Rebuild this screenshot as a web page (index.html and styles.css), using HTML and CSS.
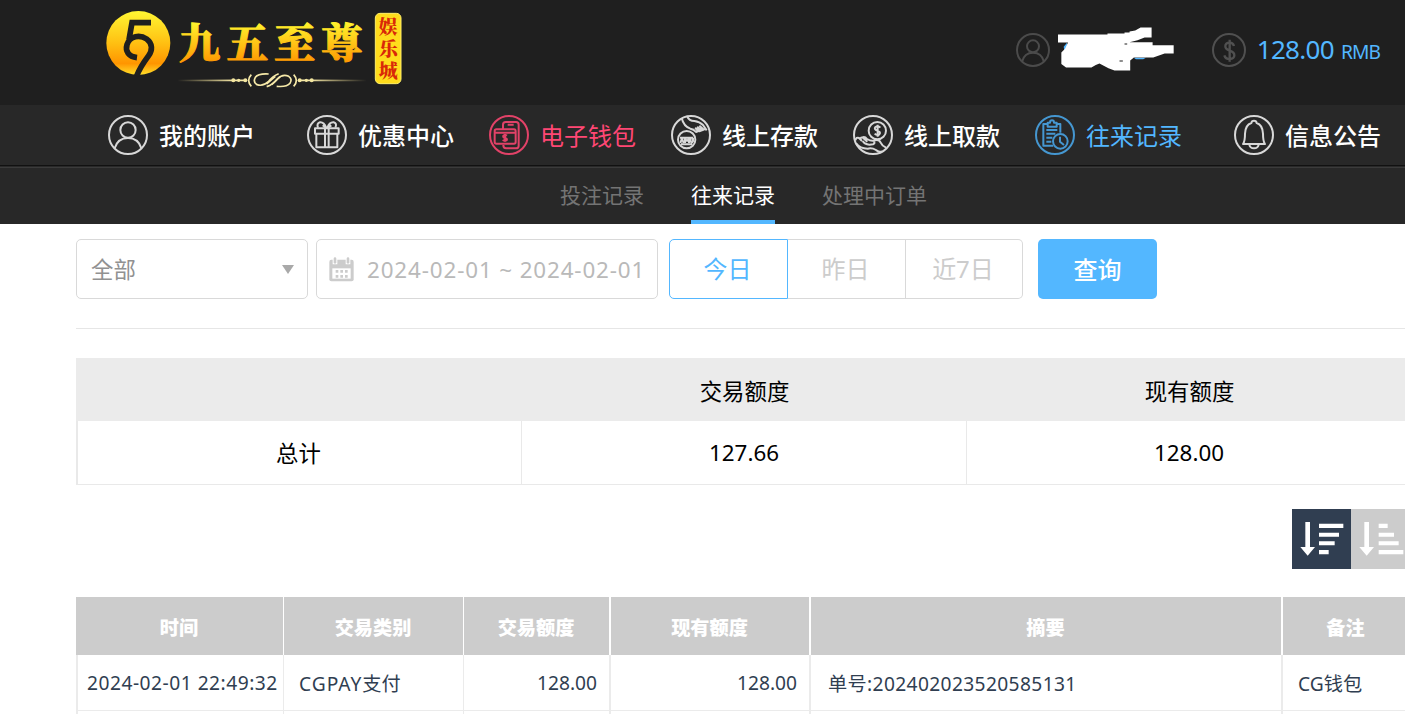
FILE: index.html
```
<!DOCTYPE html>
<html lang="zh-CN">
<head>
    <meta charset="UTF-8">
    <title>往来记录</title>
    <link rel="stylesheet" href="styles.css">
</head>
<body>
    <header class="header">
        <svg class="logo" viewBox="0 0 990 315">
            <defs>
                <linearGradient id="gold" x1="0" y1="0" x2="0" y2="1">
                    <stop offset="0" stop-color="#fff633"/>
                    <stop offset="0.5" stop-color="#ffc012"/>
                    <stop offset="0.82" stop-color="#ff9500"/>
                    <stop offset="1" stop-color="#ffe02a"/>
                </linearGradient>
                <linearGradient id="goldText" gradientUnits="userSpaceOnUse" x1="0" y1="70" x2="0" y2="190">
                    <stop offset="0" stop-color="#fff22c"/>
                    <stop offset="1" stop-color="#ff9600"/>
                </linearGradient>
                <linearGradient id="rule" gradientUnits="userSpaceOnUse" x1="262" y1="0" x2="830" y2="0">
                    <stop offset="0" stop-color="#e9d78c" stop-opacity="0"/>
                    <stop offset="0.3" stop-color="#f6e9a8"/>
                    <stop offset="0.7" stop-color="#f6e9a8"/>
                    <stop offset="1" stop-color="#e9d78c" stop-opacity="0"/>
                </linearGradient>
            </defs>
            <circle cx="145" cy="129" r="96" fill="url(#gold)"/>
            <g fill="none" stroke="#1f1f1f" stroke-width="17">
                <path d="M183 68H126L117 119"/>
                <path d="M141 173C116 170 105 154 111 134C119 106 151 104 170 117C189 131 187 152 176 167C161 187 149 204 140 228"/>
            </g>
            <g class="logo-name" fill="url(#goldText)" stroke="url(#goldText)" stroke-width="3">
                <text x="267" y="175">九</text>
                <text x="410" y="175">五</text>
                <text x="552" y="175">至</text>
                <text x="694" y="175">尊</text>
            </g>
            <g fill="none" stroke="url(#rule)" stroke-width="5">
                <path d="M262 241.500L470 241M624 241L830 241.500"/>
                <path d="M484 224Q468 241 484 259M611 224Q627 241 611 259"/>
                <path d="M536 222Q505 220 496 232Q488 246 501 254Q520 260 535 245Q548 228 566 221"/>
                <path d="M560 259Q590 262 600 250Q608 237 596 229Q578 221 562 237Q549 254 530 260"/>
                <path d="M556 229L530 252M570 230L545 254"/>
            </g>
            <g fill="#f3e6a0">
                <circle cx="430" cy="241" r="6"/><circle cx="446" cy="241" r="5"/><circle cx="466" cy="241" r="6"/>
                <circle cx="629" cy="241" r="6"/><circle cx="649" cy="241" r="5"/><circle cx="665" cy="241" r="6"/>
            </g>
            <rect x="856" y="40" width="77" height="211" rx="14" fill="#ffdc1c" stroke="#fff06a" stroke-width="3"/>
            <g class="logo-tag" fill="#d92808">
                <text x="866" y="102">娱</text>
                <text x="866" y="168">乐</text>
                <text x="866" y="234">城</text>
            </g>
        </svg>
        <div class="user">
            <svg class="user-icon" viewBox="0 0 102 102">
                <circle cx="51" cy="51" r="48"/>
                <circle cx="51" cy="40" r="18"/>
                <path d="M18 86Q25 59 51 59Q77 59 84 86"/>
            </svg>
            <svg class="user-name" viewBox="173 53 347 131">
                <path d="M400 145h36l-8 4h-22zM190 112l10-12v15l-8 8z" fill="#53b7ff"/>
                <path d="M173 75H321V72H372V69H387V66L404 63L420 54H453V84H432L411 92L387 98H456V107H519V132H492L458 144H400L389 153V183H342L324 176L297 162L286 166L273 174H197L183 163V129L194 118L203 99H173Z" fill="#fff"/>
                <path d="M372 102h8v3h-8zM357 153h10v3h-10z" fill="#1f1f1f"/>
            </svg>
            <svg class="user-icon money-icon" viewBox="0 0 102 102">
                <circle cx="51" cy="51" r="48"/>
                <path d="M53 20V86M66 39Q63 29 53 29Q40 29 40 40Q40 49 53 53Q67 57 67 67Q67 78 53 78Q40 78 37 67" stroke-width="7"/>
            </svg>
            <span class="balance">128.00</span>
            <span class="currency">RMB</span>
        </div>
    </header>

    <nav class="nav">
        <a class="nav-item">
            <svg class="nav-icon" viewBox="0 0 120 120">
                <circle cx="60" cy="60" r="57"/>
                <circle cx="60" cy="45" r="23"/>
                <path d="M20 100Q29 69 60 69Q91 69 100 100"/>
            </svg>
            <span>我的账户</span>
        </a>
        <a class="nav-item">
            <svg class="nav-icon" viewBox="0 0 120 120">
                <circle cx="60" cy="60" r="57"/>
                <path d="M24 40H95V56H24ZM28 56V97H91V56M54 40V97M65 40V97"/>
                <path d="M58 39Q51 21 39 22Q28 25 33 38M61 39Q67 21 80 22Q91 25 85 38M57 39L47 31M62 39L73 31"/>
            </svg>
            <span>优惠中心</span>
        </a>
        <a class="nav-item wallet">
            <svg class="nav-icon" viewBox="0 0 120 120">
                <circle cx="60" cy="60" r="57"/>
                <path d="M42 43V29Q42 21 50 21H81Q89 21 89 29V92Q89 100 81 100H51Q43 100 43 90M56 29H74"/>
                <path d="M22 43H75Q80 43 80 49V82Q80 86 75 86H22Q17 86 17 81V48Q17 43 22 43ZM17 53H80"/>
                <path d="M48 57V80M54 62Q48 58 43 62Q41 67 48 69Q56 71 53 76Q48 80 41 75"/>
            </svg>
            <span>电子钱包</span>
        </a>
        <a class="nav-item">
            <svg class="nav-icon" viewBox="0 0 120 120">
                <circle cx="60" cy="60" r="57"/>
                <circle cx="47" cy="74" r="26"/>
                <path d="M27 68H67M28 84L33 70L38 84M42 84V70L48 78L54 70V84M59 69V79Q62 86 66 79V69M30 88H64"/>
                <path d="M32 9Q38 34 58 41Q68 42 75 51L81 49L74 40L85 49L91 47L80 37L93 46L99 44L85 32M49 5Q54 18 70 18Q86 20 96 30L107 46"/>
            </svg>
            <span>线上存款</span>
        </a>
        <a class="nav-item">
            <svg class="nav-icon" viewBox="0 0 120 120">
                <circle cx="60" cy="60" r="57"/>
                <circle cx="73" cy="47" r="26"/>
                <path d="M74 29V65M82 38Q76 31 67 36Q62 43 73 47Q85 51 79 58Q72 63 65 56"/>
                <path d="M7 76Q10 65 18 69L27 78M22 70Q27 64 34 72L43 80M28 67Q36 64 42 72Q55 80 67 76Q78 73 83 83Q88 94 99 98M29 78Q35 88 49 89L60 88Q68 84 62 80M10 86Q21 101 44 101Q57 98 69 105Q77 113 87 109"/>
            </svg>
            <span>线上取款</span>
        </a>
        <a class="nav-item active">
            <svg class="nav-icon" viewBox="0 0 120 120">
                <circle cx="60" cy="60" r="57"/>
                <path d="M37 27H25V92H55M66 27H76V53M38 23H45Q45 16 51 16Q57 16 57 23H65V35H38Z"/>
                <path d="M34 45H67M34 56H61M34 68H52M34 80H49"/>
                <circle cx="76" cy="79" r="22"/>
                <path d="M75 65V80L87 90"/>
            </svg>
            <span>往来记录</span>
        </a>
        <a class="nav-item">
            <svg class="nav-icon" viewBox="0 0 120 120">
                <circle cx="60" cy="60" r="57"/>
                <path d="M27 87Q33 79 33 56Q34 30 52 24Q53 17 60 17Q67 17 68 24Q86 30 87 56Q87 79 93 87ZM46 89Q48 100 60 100Q72 100 74 89"/>
            </svg>
            <span>信息公告</span>
        </a>
    </nav>

    <div class="subnav">
        <a>投注记录</a>
        <a class="current">往来记录</a>
        <a>处理中订单</a>
    </div>

    <main class="content">
        <div class="filters">
            <div class="select">
                <span>全部</span>
                <i class="caret"></i>
            </div>
            <div class="date-range">
                <svg class="calendar" viewBox="0 0 75 75">
                    <path d="M7 8H68Q74 8 74 15V67Q74 73 68 73H7Q1 73 1 67V15Q1 8 7 8Z" fill="#ccc"/>
                    <path d="M10 34H65V65H10Z" fill="#fff"/>
                    <path d="M11 0H25V22H11ZM50 0H64V22H50Z" fill="#fff"/>
                    <rect x="14" y="1" width="8" height="19" rx="4" fill="#ccc"/>
                    <rect x="53" y="1" width="8" height="19" rx="4" fill="#ccc"/>
                    <path d="M20 43H56M20 58H56" stroke="#ccc" stroke-width="8" stroke-dasharray="8 6"/>
                </svg>
                <span>2024-02-01 ~ 2024-02-01</span>
            </div>
            <div class="day-group">
                <a class="day selected">今日</a>
                <a class="day">昨日</a>
                <a class="day">近7日</a>
            </div>
            <a class="search">查询</a>
        </div>

        <table class="summary">
            <thead>
                <tr><th></th><th>交易额度</th><th>现有额度</th></tr>
            </thead>
            <tbody>
                <tr><td>总计</td><td>127.66</td><td>128.00</td></tr>
            </tbody>
        </table>

        <div class="sort">
            <a class="sort-btn on">
                <svg viewBox="0 0 177 180">
                    <path d="M40 39H54V114H69L47 140L25 114H40Z"/>
                    <path d="M81 44H154V57H81ZM81 71H141V83H81ZM81 97H128V109H81ZM81 123H110V136H81Z"/>
                </svg>
            </a>
            <a class="sort-btn">
                <svg viewBox="0 0 177 180">
                    <path d="M40 39H54V114H69L47 140L25 114H40Z"/>
                    <path d="M83 44H110V57H83ZM83 71H129V83H83ZM83 97H143V109H83ZM83 123H157V136H83Z"/>
                </svg>
            </a>
        </div>

        <table class="records">
            <colgroup>
                <col class="c-time"><col class="c-type"><col class="c-amount"><col class="c-balance"><col class="c-note"><col class="c-remark">
            </colgroup>
            <thead>
                <tr>
                    <th>时间</th>
                    <th>交易类别</th>
                    <th class="wide">交易额度</th>
                    <th class="wide">现有额度</th>
                    <th class="wide">摘要</th>
                    <th>备注</th>
                </tr>
            </thead>
            <tbody>
                <tr>
                    <td class="time">2024-02-01 22:49:32</td>
                    <td><span class="pay">CGPAY</span>支付</td>
                    <td class="num wide">128.00</td>
                    <td class="num wide">128.00</td>
                    <td class="note wide">单号:202402023520585131</td>
                    <td>CG钱包</td>
                </tr>
                <tr class="tail"><td class="time"></td><td></td><td class="wide"></td><td class="wide"></td><td class="wide"></td><td></td></tr>
            </tbody>
        </table>
    </main>
</body>
</html>
```
FILE: styles.css
```
* {
    box-sizing: border-box;
}

body {
    margin: 0;
    height: 714px;
    overflow: hidden;
    background: #fff;
    font-family: "Noto Sans", "Noto Sans CJK SC", sans-serif;
    color: #000;
}

svg {
    display: block;
}

.header {
    display: flex;
    justify-content: space-between;
    height: 105px;
    padding: 0 25px 0 90px;
    background: #1f1f1f;
}

.logo {
    width: 330px;
    height: 105px;
}

.logo-name {
    font: 900 124px "Noto Serif CJK SC", "Noto Sans CJK SC", serif;
}

.logo-tag {
    font: 900 57px "Noto Serif CJK SC", "Noto Sans CJK SC", serif;
}

.user {
    display: flex;
    align-items: center;
    height: 100px;
    color: #53b7ff;
}

.user-icon {
    width: 34px;
    height: 34px;
    fill: none;
    stroke: #4b4b4b;
    stroke-width: 6;
}

.money-icon {
    stroke: #505050;
}

.user-name {
    width: 116px;
    height: 44px;
    margin: -2px 38px 0 8px;
}

.balance {
    margin: -2px 0 0 11px;
    font-size: 26px;
    letter-spacing: -0.7px;
}

.currency {
    margin: 2px 0 0 7px;
    font-size: 19.2px;
    letter-spacing: -0.9px;
}

.nav {
    display: grid;
    grid-template-columns: 199px repeat(4, 182px) 199px 171px;
    height: 60px;
    padding-left: 108px;
    background: #282828;
}

.nav-item {
    display: flex;
    align-items: center;
    gap: 11px;
    color: #fff;
    font-size: 24px;
    font-weight: 500;
    white-space: nowrap;
}

.nav-item span {
    margin-top: -2px;
}

.nav-icon {
    width: 40px;
    height: 40px;
    fill: none;
    stroke: #d8d8d8;
    stroke-width: 6;
    stroke-linejoin: round;
}

.wallet {
    color: #ff4774;
    font-weight: 400;
}

.wallet .nav-icon {
    stroke: #e24268;
}

.active {
    color: #53b7ff;
    font-weight: 400;
}

.active .nav-icon {
    stroke: #4597d1;
}

.subnav {
    display: flex;
    gap: 47px;
    height: 59px;
    padding-left: 560px;
    border-top: 1px solid #111;
    background: linear-gradient(#282828 1px, #3b3b3b 1px, #3b3b3b 2px, #282828 2px);
    font-size: 21px;
    line-height: 59px;
    color: #747474;
}

.subnav a {
    height: 58px;
}

.subnav .current {
    color: #fff;
    border-bottom: 4px solid #53b7ff;
}

.content {
    width: 1410px;
    padding-left: 76px;
}

.filters {
    display: flex;
    height: 105px;
    padding-top: 15px;
    border-bottom: 1px solid #e6e6e6;
    font-size: 24px;
    line-height: 60px;
}

.select {
    display: flex;
    align-items: center;
    justify-content: space-between;
    width: 232px;
    height: 60px;
    margin-right: 8px;
    padding: 0 13px 0 14px;
    border: 1px solid #d9d9d9;
    border-radius: 5px;
    color: #919191;
    font-size: 22.400px;
}

.select span,
.date-range span {
    margin-top: 2px;
}

.caret {
    border: 6px solid transparent;
    border-top: 9px solid #a9a9a9;
    border-bottom: 0;
}

.date-range {
    display: flex;
    align-items: center;
    width: 342px;
    height: 60px;
    margin-right: 11px;
    padding-left: 12px;
    border: 1px solid #d9d9d9;
    border-radius: 5px;
    color: #b9b9b9;
    font-size: 22.400px;
    letter-spacing: 0.87px;
    white-space: nowrap;
}

.calendar {
    width: 25px;
    height: 25px;
    margin-right: 13px;
}

.day-group {
    display: flex;
    height: 60px;
    margin-right: 15px;
    line-height: 58px;
    text-align: center;
    color: #ccc;
}

.day {
    width: 118px;
    padding-right: 2px;
    border: 1px solid #d9d9d9;
    border-left: 0;
}

.day.selected {
    width: 119px;
    border: 1px solid #53b7ff;
    border-radius: 5px 0 0 5px;
    color: #53b7ff;
}

.day:last-child {
    width: 117px;
    border-radius: 0 5px 5px 0;
}

.search {
    width: 119px;
    height: 60px;
    border-radius: 5px;
    background: #53b7ff;
    color: #fff;
    font-weight: 500;
    line-height: 61px;
    text-align: center;
}

.summary {
    width: 1336px;
    margin-top: 29px;
    border-spacing: 0;
    table-layout: fixed;
    font-size: 22.400px;
    text-align: center;
}

.summary th {
    height: 63px;
    padding: 1px 0 0;
    background: #ebebeb;
    font-weight: 400;
}

.summary th:first-child {
    width: 446px;
}

.summary td {
    height: 64px;
    padding: 0;
    border-right: 1px solid #e9e9e9;
    border-bottom: 1px solid #e9e9e9;
}

.summary td:first-child {
    padding-right: 2px;
    border-left: 2px solid #e9e9e9;
}

.sort {
    display: flex;
    justify-content: flex-end;
    margin: 24px 0 28px;
}

.sort-btn {
    width: 59px;
    height: 60px;
    background: #ccc;
    fill: #fff;
}

.sort-btn.on {
    background: #303e51;
}

.records {
    width: 1334px;
    border-spacing: 0;
    table-layout: fixed;
    color: #303e51;
    font-size: 19.200px;
    white-space: nowrap;
}

.c-time { width: 208px; }
.c-type { width: 180px; }
.c-amount { width: 147px; }
.c-balance { width: 200px; }
.c-note { width: 472px; }
.c-remark { width: 127px; }

.records th {
    height: 58px;
    padding: 2px 1px 0 0;
    border-right: 1px solid #fff;
    background: #ccc;
    color: #fff;
    font-weight: 900;
}

.records td {
    height: 56px;
    padding: 0 0 0 15px;
    border-right: 1px solid #ebebeb;
    border-bottom: 1px solid #ebebeb;
}

.records .wide {
    border-right-width: 2px;
}

.records .time {
    padding-left: 9px;
    border-left: 2px solid #ebebeb;
    letter-spacing: 0.5px;
}

.records .pay {
    letter-spacing: 1px;
}

.records .num {
    padding-right: 12px;
    text-align: right;
}

.records .note {
    padding-left: 17px;
    letter-spacing: 0.36px;
}

.records .tail td {
    height: 3px;
    border-bottom: 0;
}
```
